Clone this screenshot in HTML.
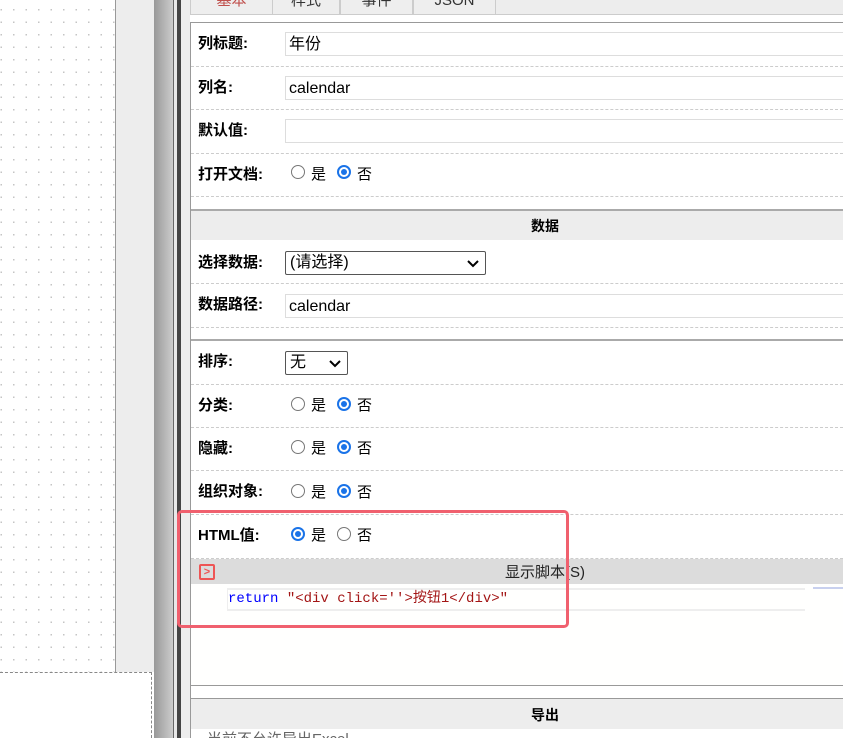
<!DOCTYPE html>
<html style="overflow:hidden;height:738px"><head><meta charset="utf-8"><style>
*{margin:0;padding:0;box-sizing:border-box}
body{width:843px;height:738px;overflow:hidden;position:relative;background:#fff;font-family:"Liberation Sans","Noto Sans CJK SC",sans-serif;font-size:14px;color:#000}
.a{position:absolute}
.dots{left:0;top:0;width:115px;height:672px;background-color:#fff;background-image:radial-gradient(circle,#c4c4c4 0.7px,transparent 1px);background-size:12.5px 12.5px;background-position:-5px 3.5px}
.lab{position:absolute;left:198px;font-weight:bold;font-size:15px;line-height:20px}
.inp{position:absolute;left:285px;width:600px;height:24px;border:1px solid #ddd;font-size:16px;padding-left:3px;line-height:24px}
.sep{position:absolute;left:191px;width:652px;border-top:1px dashed #ccc;height:0}
.sol{position:absolute;left:191px;width:652px;border-top:2px solid #aaa;height:0}
.hd{position:absolute;left:191px;width:708px;background:#ededed;text-align:center;font-weight:bold;font-size:14px}
.r{position:absolute;width:14px;height:14px;border-radius:50%;border:1px solid #777;background:#fff}
.r.on{border:2px solid #1a73e8}
.r.on::after{content:"";position:absolute;left:2px;top:2px;width:6px;height:6px;border-radius:50%;background:#1a73e8}
.t{position:absolute;font-size:15px;line-height:18px}
.sel{position:absolute;border:1px solid #555;border-radius:2px;height:24px;font-size:16px;line-height:22px;padding-left:4px}
.sel svg{position:absolute;right:6px;top:8px}
.tab{position:absolute;top:-10px;height:24px;border:1px solid #ccc;border-bottom:none;border-radius:0 10px 0 0;background:#eee;text-align:center;font-size:15px;line-height:20px;color:#333}
</style></head><body>
<div class="a dots"></div>
<div class="a" style="left:115px;top:0;width:1px;height:672px;background:#999"></div>
<div class="a" style="left:116px;top:0;width:38px;height:672px;background:#ededed"></div>
<div class="a" style="left:0;top:672px;width:152px;height:66px;border-top:1px dashed #888;border-right:1px dashed #888;background:#fff"></div>
<div class="a" style="left:154px;top:0;width:19px;height:738px;background:linear-gradient(to right,#999,#ccc)"></div>
<div class="a" style="left:173px;top:0;width:1px;height:738px;background:#666"></div>
<div class="a" style="left:174px;top:0;width:3px;height:738px;background:#e8e8e8"></div>
<div class="a" style="left:177px;top:0;width:4px;height:738px;background:#444"></div>
<div class="a" style="left:181px;top:0;width:9px;height:738px;background:#ededed"></div>
<div class="a" style="left:190px;top:0;width:653px;height:15px;background:#ededed;border-bottom:1px solid #ccc"></div>
<div class="tab" style="left:190px;width:83px;color:#c0504d">基本</div>
<div class="tab" style="left:272px;width:68px">样式</div>
<div class="tab" style="left:340px;width:73px">事件</div>
<div class="tab" style="left:413px;width:83px">JSON</div>
<div class="a" style="left:190px;top:15px;width:653px;height:7px;background:#fff"></div>
<div class="a" style="left:190px;top:22px;width:653px;height:716px;border-left:1px solid #999;border-top:1px solid #999;background:#fff"></div>

<div class="lab" style="top:34px">列标题:</div><div class="inp" style="top:32px">年份</div>
<div class="sep" style="top:66px"></div>
<div class="lab" style="top:78px">列名:</div><div class="inp" style="top:76px">calendar</div>
<div class="sep" style="top:109px"></div>
<div class="lab" style="top:121px">默认值:</div><div class="inp" style="top:119px"></div>
<div class="sep" style="top:153px"></div>
<div class="lab" style="top:165px">打开文档:</div>
<div class="r" style="left:291px;top:165px"></div><div class="t" style="left:311px;top:166px">是</div>
<div class="r on" style="left:337px;top:165px"></div><div class="t" style="left:357px;top:166px">否</div>
<div class="sep" style="top:196px"></div>
<div class="sol" style="top:209px"></div>
<div class="hd" style="top:211px;height:29px;line-height:31px">数据</div>

<div class="lab" style="top:253px">选择数据:</div>
<div class="sel" style="left:285px;top:251px;width:201px">(请选择)<svg width="12" height="8"><path d="M1 1L6 6L11 1" stroke="#000" stroke-width="2" fill="none"/></svg></div>
<div class="sep" style="top:283px"></div>
<div class="lab" style="top:295px">数据路径:</div><div class="inp" style="top:294px">calendar</div>
<div class="sep" style="top:327px"></div>
<div class="sol" style="top:339px"></div>
<div class="lab" style="top:352px">排序:</div>
<div class="sel" style="left:285px;top:351px;width:63px">无<svg width="12" height="8"><path d="M1 1L6 6L11 1" stroke="#000" stroke-width="2" fill="none"/></svg></div>
<div class="sep" style="top:384px"></div>
<div class="lab" style="top:396px">分类:</div>
<div class="r" style="left:291px;top:397px"></div><div class="t" style="left:311px;top:397px">是</div>
<div class="r on" style="left:337px;top:397px"></div><div class="t" style="left:357px;top:397px">否</div>
<div class="sep" style="top:427px"></div>
<div class="lab" style="top:439px">隐藏:</div>
<div class="r" style="left:291px;top:440px"></div><div class="t" style="left:311px;top:440px">是</div>
<div class="r on" style="left:337px;top:440px"></div><div class="t" style="left:357px;top:440px">否</div>
<div class="sep" style="top:470px"></div>
<div class="lab" style="top:482px">组织对象:</div>
<div class="r" style="left:291px;top:484px"></div><div class="t" style="left:311px;top:484px">是</div>
<div class="r on" style="left:337px;top:484px"></div><div class="t" style="left:357px;top:484px">否</div>
<div class="sep" style="top:514px"></div>
<div class="lab" style="top:526px">HTML值:</div>
<div class="r on" style="left:291px;top:527px"></div><div class="t" style="left:311px;top:527px">是</div>
<div class="r" style="left:337px;top:527px"></div><div class="t" style="left:357px;top:527px">否</div>
<div class="sep" style="top:558px"></div>
<div class="a" style="left:191px;top:559px;width:708px;height:25px;background:#dcdcdc;text-align:center;font-size:15px;line-height:28px;color:#222">显示脚本(S)</div>
<div class="a" style="left:199px;top:564px;width:16px;height:16px;border:2px solid #e55;border-radius:2px;color:#e55;font-size:11px;line-height:12px;text-align:center;font-weight:bold">&gt;</div>
<div class="a" style="left:191px;top:584px;width:652px;height:101px;background:#fffffe"></div>
<div class="a" style="left:227px;top:588px;width:578px;height:23px;border-top:2px solid #eee;border-bottom:2px solid #eee;border-left:1px solid #eee;font-family:'Liberation Mono','Noto Sans CJK SC',monospace;font-size:14px;line-height:19px;color:#a31515"><span style="color:#00f">return</span> "&lt;div click=''&gt;按钮1&lt;/div&gt;"</div>
<div class="a" style="left:813px;top:587px;width:30px;height:2px;background:#c8d0ee"></div>
<div class="a" style="left:191px;top:685px;width:652px;height:1px;background:#999"></div>
<div class="a" style="left:191px;top:698px;width:652px;height:1px;background:#999"></div>
<div class="hd" style="top:699px;height:30px;line-height:32px">导出</div>
<div class="t" style="left:207px;top:731px;color:#666">当前不允许导出Excel</div>
<div class="a" style="left:177px;top:510px;width:392px;height:118px;border:3px solid #f0606e;border-radius:5px"></div>
</body></html>
